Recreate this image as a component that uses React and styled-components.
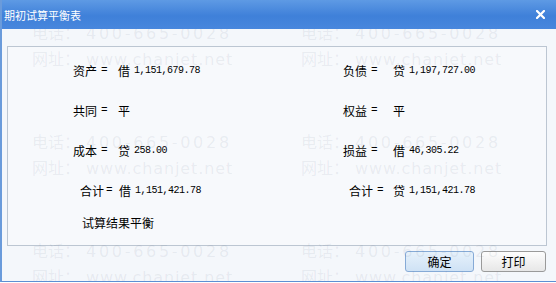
import React from "react";
import styled, { createGlobalStyle } from "styled-components";

const Global = createGlobalStyle`
  html, body {
    margin: 0;
    padding: 0;
    background: #ffffff;
  }
  body {
    font-family: "Noto Sans CJK SC", "Liberation Sans", sans-serif;
  }
`;

const Window = styled.div`
  position: relative;
  box-sizing: border-box;
  width: 556px;
  height: 282px;
  display: flex;
  flex-direction: column;
  background: #f4f7fb;
  border-left: 2px solid #6a9bdb;
  border-bottom: 1px solid #5c8fd3;
  overflow: hidden;
`;

const TitleBar = styled.div`
  position: relative;
  z-index: 2;
  height: 29px;
  margin-left: -2px;
  padding: 0 11px 0 4px;
  display: flex;
  align-items: center;
  justify-content: space-between;
  background: linear-gradient(#5e9ae4 0%, #3f80d9 55%, #4887dd 100%);
  color: #ffffff;
  font-size: 11px;
`;

const Body = styled.div`
  flex: 1;
  display: flex;
  flex-direction: column;
  padding: 17px 9px 0 5px;
`;

const Panel = styled.div`
  box-sizing: border-box;
  height: 200px;
  border: 1px solid #bcc6d2;
  background: #f7f9fc;
  display: grid;
  grid-template-columns: 270px 1fr;
  grid-auto-rows: 40px;
  align-content: start;
  padding: 3px 0 0 65px;
  color: #000000;
`;

const Entry = styled.div`
  display: flex;
  align-items: center;
  font-size: 12px;
  padding-left: ${(p) => p.$shift || 0}px;
`;

const Head = styled.div`
  width: ${(p) => p.$width}px;
  display: flex;
  align-items: center;
  white-space: nowrap;
`;

const Eq = styled.span`
  margin-left: ${(p) => p.$gap || 4}px;
  font-family: "Liberation Mono", monospace;
  font-size: 11px;
`;

const Sign = styled.span`
  width: 16px;
`;

const Amount = styled.span`
  font-family: "Liberation Mono", monospace;
  font-size: 10px;
  letter-spacing: -0.5px;
`;

const Result = styled.div`
  grid-column: 1 / -1;
  height: 24px;
  display: flex;
  align-items: center;
  padding-left: 9px;
  font-size: 12px;
`;

const Actions = styled.div`
  display: flex;
  justify-content: flex-end;
  gap: 7px;
  margin-top: 5px;
  padding-right: 1px;
`;

const Button = styled.button`
  box-sizing: border-box;
  width: ${(p) => p.$width}px;
  height: 21px;
  padding: 0;
  border-radius: 3px;
  font-family: "Noto Sans CJK SC", sans-serif;
  font-size: 12px;
  color: #000000;
  border: 1px solid ${(p) => (p.$primary ? "#86aad6" : "#9a9a9a")};
  background: ${(p) =>
    p.$primary
      ? "linear-gradient(#e6f1fb, #cfe2f5)"
      : "linear-gradient(#fdfdfd, #e7e7e7)"};
`;

const Watermark = styled.div`
  position: absolute;
  inset: 0;
  z-index: 1;
  pointer-events: none;
  display: grid;
  grid-template-columns: repeat(2, 269px);
  grid-auto-rows: 109px;
  padding: 19px 0 0 30px;
  color: rgba(100, 115, 135, 0.1);
`;

const Tile = styled.div`
  display: flex;
  flex-direction: column;
`;

const Mark = styled.div`
  height: 26px;
  line-height: 26px;
  white-space: nowrap;
`;

const Cn = styled.span`
  font-family: "Noto Sans CJK SC", sans-serif;
  font-size: 16px;
`;

const Lat = styled.span`
  margin-left: 6px;
  font-family: "DejaVu Sans", sans-serif;
  font-size: 16px;
  letter-spacing: ${(p) => p.$spacing}px;
`;

const rows = [
  [
    { label: "资产", sign: "借", amount: "1,151,679.78", head: 45 },
    { label: "负债", sign: "贷", amount: "1,197,727.00", head: 50 },
  ],
  [
    { label: "共同", sign: "平", head: 45 },
    { label: "权益", sign: "平", head: 50 },
  ],
  [
    { label: "成本", sign: "贷", amount: "258.00", head: 45 },
    { label: "损益", sign: "借", amount: "46,305.22", head: 50 },
  ],
  [
    { label: "合计", sign: "借", amount: "1,151,421.78", head: 39, shift: 7, gap: 2 },
    { label: "合计", sign: "贷", amount: "1,151,421.78", head: 44, shift: 6 },
  ],
];

const CloseIcon = () => (
  <svg width="9" height="9" viewBox="0 0 9 9">
    <path d="M1 1 L8 8 M8 1 L1 8" stroke="#ffffff" strokeWidth="2.2" strokeLinecap="square" />
  </svg>
);

export default function App() {
  return (
    <>
      <Global />
      <Window>
        <TitleBar>
          <span>期初试算平衡表</span>
          <CloseIcon />
        </TitleBar>
        <Body>
          <Panel>
            {rows.flat().map((e, i) => (
              <Entry key={i} $shift={e.shift}>
                <Head $width={e.head}>
                  {e.label}
                  <Eq $gap={e.gap}>=</Eq>
                </Head>
                <Sign>{e.sign}</Sign>
                {e.amount && <Amount>{e.amount}</Amount>}
              </Entry>
            ))}
            <Result>试算结果平衡</Result>
          </Panel>
          <Actions>
            <Button $primary $width={69}>确定</Button>
            <Button $width={65}>打印</Button>
          </Actions>
        </Body>
        <Watermark>
          {Array.from({ length: 6 }).map((_, i) => (
            <Tile key={i}>
              <Mark>
                <Cn>电话：</Cn>
                <Lat $spacing={2.7}>400-665-0028</Lat>
              </Mark>
              <Mark>
                <Cn>网址：</Cn>
                <Lat $spacing={0.9}>www.chanjet.net</Lat>
              </Mark>
            </Tile>
          ))}
        </Watermark>
      </Window>
    </>
  );
}
